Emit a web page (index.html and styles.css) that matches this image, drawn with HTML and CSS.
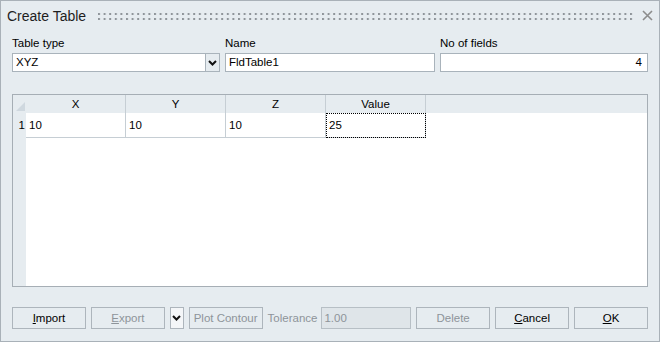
FILE: index.html
```html
<!DOCTYPE html>
<html lang="en">

<head>
    <meta charset="UTF-8">
    <title>Create Table</title>
    <link rel="stylesheet" href="styles.css">
</head>

<body>
    <div class="dialog">
        <div class="titlebar">
            <span class="title">Create Table</span>
            <svg class="grip" height="7">
                <defs>
                    <pattern id="dots" width="5.6" height="5" patternUnits="userSpaceOnUse">
                        <rect width="2" height="2" fill="#8f959a"/>
                    </pattern>
                </defs>
                <rect width="100%" height="7" fill="url(#dots)"/>
            </svg>
            <svg class="close" width="11" height="11" viewBox="0 0 11 11">
                <path d="M1 1 L10 10 M10 1 L1 10" stroke="#8c8c8c" stroke-width="1.6"/>
            </svg>
        </div>

        <div class="fields">
            <div class="field">
                <label>Table type</label>
                <div class="combo">
                    <div class="input">XYZ</div>
                    <div class="drop">
                        <svg width="9" height="6" viewBox="0 0 9 6"><path d="M1 1 L4.5 4.5 L8 1" fill="none" stroke="#111" stroke-width="2"/></svg>
                    </div>
                </div>
            </div>
            <div class="field">
                <label>Name</label>
                <div class="input">FldTable1</div>
            </div>
            <div class="field">
                <label>No of fields</label>
                <div class="input right">4</div>
            </div>
        </div>

        <div class="grid">
            <div class="head corner"></div>
            <div class="head">X</div>
            <div class="head">Y</div>
            <div class="head">Z</div>
            <div class="head">Value</div>
            <div class="head blank"></div>

            <div class="rowhead">1</div>
            <div class="cell">10</div>
            <div class="cell">10</div>
            <div class="cell">10</div>
            <div class="cell focus">25</div>
            <div class="cell empty"></div>

            <div class="rowhead fill"></div>
            <div class="fill white"></div>
        </div>

        <div class="buttons">
            <button class="btn"><u>I</u>mport</button>
            <button class="btn" disabled><u>E</u>xport</button>
            <button class="mini">
                <svg width="9" height="6" viewBox="0 0 9 6"><path d="M1 1 L4.5 4.5 L8 1" fill="none" stroke="#111" stroke-width="2"/></svg>
            </button>
            <button class="btn" disabled>Plot Contour</button>
            <span class="tol-label">Tolerance</span>
            <div class="tol">1.00</div>
            <button class="btn" disabled>Delete</button>
            <button class="btn"><u>C</u>ancel</button>
            <button class="btn"><u>O</u>K</button>
        </div>
    </div>
</body>

</html>
```

FILE: styles.css
```css
body {
    margin: 0;
    font-family: 'Liberation Sans', Arial, sans-serif;
    font-size: 11px;
    color: #000;
    background: #e6ecf0;
}

.dialog {
    width: 660px;
    height: 342px;
    box-sizing: border-box;
    border: 1px solid #a9b1b8;
    background: #e6ecf0;
    padding: 0 11px;
    display: flex;
    flex-direction: column;
}

.titlebar {
    height: 29px;
    display: flex;
    align-items: center;
    margin: 0 0 0 -5px;
}

.title {
    font-size: 14px;
    color: #1e1e1e;
    margin-right: 12px;
}

.grip {
    flex: 1;
    margin-right: 8px;
    margin-top: 1px;
}

.close {
    margin-right: -5px;
}

.fields {
    display: grid;
    grid-template-columns: 208px 210px 1fr;
    column-gap: 5px;
    margin-top: 5px;
}

.field label {
    display: block;
    height: 18px;
    line-height: 16px;
    font-size: 11.5px;
}

.combo {
    display: flex;
}

.combo .input {
    flex: 1;
}

.input {
    height: 19px;
    box-sizing: border-box;
    border: 1px solid #a9b3bb;
    background: #fff;
    padding: 0 3px;
    line-height: 17px;
    font-size: 11.5px;
}

.input.right {
    text-align: right;
    padding-right: 5px;
}

.drop {
    width: 14px;
    height: 19px;
    box-sizing: border-box;
    border: 1px solid #a9b3bb;
    border-left: none;
    display: flex;
    align-items: center;
    justify-content: center;
}

.grid {
    margin-top: 22px;
    height: 193px;
    box-sizing: border-box;
    border: 1px solid #a6aeb5;
    display: grid;
    grid-template-columns: 13px 100px 100px 100px 100px 1fr;
    grid-template-rows: 18px 25px 1fr;
    background: #fff;
}

.head {
    background: #e6ecf0;
    border-right: 1px solid #c6ced4;
    text-align: center;
    line-height: 18px;
    font-size: 11.5px;
}

.head.blank {
    border-right: none;
}

.corner {
    border-right: none;
    position: relative;
}

.corner::after {
    content: "";
    position: absolute;
    right: 1px;
    bottom: 2px;
    border-style: solid;
    border-width: 0 0 9px 9px;
    border-color: transparent transparent #cfd8df transparent;
}

.rowhead {
    background: #e6ecf0;
    text-align: right;
    padding-right: 1px;
    line-height: 24px;
    font-size: 11.5px;
}

.cell {
    border-right: 1px solid #c6ced4;
    border-bottom: 1px solid #c6ced4;
    padding-left: 3px;
    line-height: 24px;
    font-size: 11.5px;
}

.cell.empty {
    border: none;
}

.cell.focus {
    outline: 1px dotted #000;
    outline-offset: -1px;
}

.rowhead.fill {
    grid-column: 1;
}

.fill.white {
    grid-column: 2 / 7;
    background: #fff;
}

.buttons {
    display: flex;
    align-items: center;
    margin-top: 20px;
    height: 22px;
}

button {
    font-family: inherit;
    font-size: 11.5px;
    height: 22px;
    box-sizing: border-box;
    background: #e6ecf0;
    border: 1px solid #adb5bc;
    color: #000;
    padding: 0;
    margin-right: 5px;
}

button:disabled {
    color: #8e949a;
}

.btn {
    width: 75px;
}

.mini {
    width: 14px;
    background: #f4f6f8;
    display: flex;
    align-items: center;
    justify-content: center;
}

.tol-label {
    color: #8e949a;
    font-size: 11.5px;
    margin-right: 4px;
}

.tol {
    width: 91px;
    height: 22px;
    box-sizing: border-box;
    border: 1px solid #b7bfc5;
    background: #dfe5e9;
    color: #8e949a;
    padding-left: 2px;
    line-height: 20px;
    font-size: 11.5px;
    margin-right: 5px;
}

.buttons .btn:last-child {
    margin-right: 0;
}
```
